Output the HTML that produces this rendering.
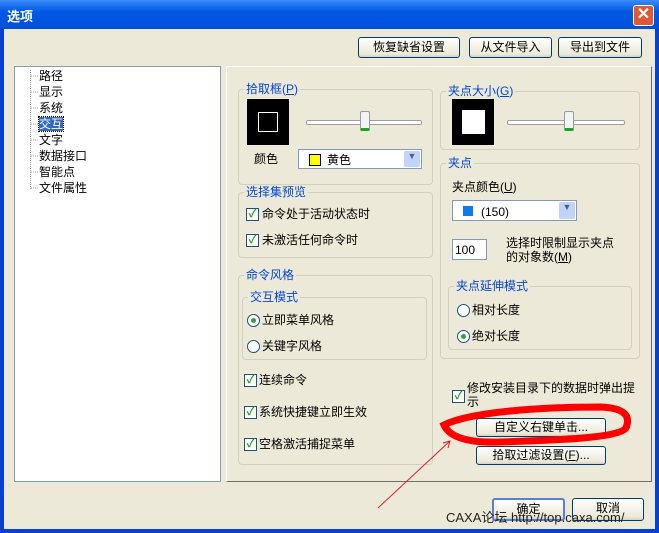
<html><head><style>
body{margin:0;width:659px;height:533px;overflow:hidden;font:12px "Liberation Sans","Noto Sans CJK SC","WenQuanYi Zen Hei",sans-serif;background:#0a246a;position:relative}
.a{position:absolute}
.win{left:0;top:0;width:659px;height:533px;background:#ECE9D8;border-left:4px solid #0841d0;border-right:4px solid #0841d0;border-bottom:4px solid #0841d0;box-sizing:border-box}
.title{left:0;top:0;width:659px;height:29px;background:linear-gradient(#3a8cf8,#0058e6 40%,#0050d8);color:#fff;font-weight:bold;font-size:13px}
.btn{border:1px solid #003c74;border-radius:3px;background:linear-gradient(#fff,#ece9d8 85%,#d6d0c0);text-align:center;box-sizing:border-box;line-height:18px}
.grp{border:1px solid #d0d0bf;border-radius:4px;box-sizing:border-box}
.gl{background:#ECE9D8;color:#0046d5;padding:0 2px;line-height:14px}
.cb{width:13px;height:13px;border:1px solid #1c5180;background:#fff;box-sizing:border-box;color:#21a121;font-size:11px;line-height:11px;text-align:center;font-weight:bold}
.rb{width:13px;height:13px;border:1px solid #1c5180;border-radius:50%;background:#fff;box-sizing:border-box}
.rb.on::after{content:"";position:absolute;left:3px;top:3px;width:5px;height:5px;border-radius:50%;background:#2fa52f}
.t{line-height:14px;white-space:nowrap}
.sel{border:1px solid #7f9db9;background:#fff;box-sizing:border-box}
.dd{position:absolute;right:1px;top:1px;bottom:1px;width:16px;background:#c1d3fb;border-radius:2px;color:#4d6185;font-size:9px;text-align:center}
.track{height:3px;border:1px solid #9d9c99;background:#fff;border-radius:2px}
.thumb{width:10px;height:20px;background:#f3f3ef;border:1px solid #8f9ea8;border-bottom:3px solid #21a121;border-radius:2px;box-sizing:border-box}
</style></head><body>
<div class="a win"></div>
<div class="a title"><span class="a" style="left:7px;top:6px">选项</span>
<div class="a" style="left:633px;top:5px;width:21px;height:21px;background:#e0583a;border:1px solid #fff;border-radius:3px;box-sizing:border-box;color:#fff;font-size:16px;text-align:center;line-height:18px">✕</div></div>
<div class="a btn" style="left:358px;top:37px;width:102px;height:21px">恢复缺省设置</div>
<div class="a btn" style="left:469px;top:37px;width:83px;height:21px">从文件导入</div>
<div class="a btn" style="left:558px;top:37px;width:84px;height:21px">导出到文件</div>
<div class="a" style="left:14px;top:66px;width:207px;height:416px;background:#fff;border:1px solid #7f9db9;box-sizing:border-box"></div>
<svg class="a" style="left:28px;top:68px" width="12" height="130"><path d="M2.5 2V121 M3 8H10 M3 24H10 M3 40H10 M3 56H10 M3 72H10 M3 88H10 M3 104H10 M3 120H10" stroke="#999" stroke-dasharray="1 1" fill="none"/></svg>
<div class="a t" style="left:39px;top:68px;line-height:16px">路径<br>显示<br>系统<br><span style="background:#316ac5;color:#fff;outline:1px dotted #000">交互</span><br>文字<br>数据接口<br>智能点<br>文件属性</div>
<div class="a" style="left:226px;top:66px;width:426px;height:416px;border:1px solid;border-color:#fff #716f64 #716f64 #fff;box-sizing:border-box"></div>
<div class="a grp" style="left:238px;top:89px;width:195px;height:96px"></div>
<div class="a gl" style="left:244px;top:82px">拾取框(<u>P</u>)</div>
<div class="a" style="left:247px;top:99px;width:42px;height:46px;background:#000"></div>
<div class="a" style="left:258px;top:112px;width:20px;height:20px;border:1px solid #fff;box-sizing:border-box"></div>
<div class="a track" style="left:306px;top:120px;width:114px"></div>
<div class="a thumb" style="left:360px;top:111px"></div>
<div class="a t" style="left:254px;top:152px">颜色</div>
<div class="a sel" style="left:298px;top:149px;width:124px;height:20px"><div class="a" style="left:10px;top:4px;width:10px;height:10px;background:#ff0;border:1px solid #000"></div><span class="a t" style="left:28px;top:3px">黄色</span><div class="dd">▼</div></div>
<div class="a grp" style="left:238px;top:192px;width:195px;height:66px"></div>
<div class="a gl" style="left:244px;top:185px">选择集预览</div>
<div class="a cb" style="left:246px;top:208px">✓</div><span class="a t" style="left:262px;top:207px">命令处于活动状态时</span>
<div class="a cb" style="left:246px;top:234px">✓</div><span class="a t" style="left:262px;top:233px">未激活任何命令时</span>
<div class="a grp" style="left:238px;top:275px;width:195px;height:190px"></div>
<div class="a gl" style="left:244px;top:268px">命令风格</div>
<div class="a grp" style="left:242px;top:297px;width:185px;height:63px"></div>
<div class="a gl" style="left:248px;top:290px">交互模式</div>
<div class="a rb on" style="left:247px;top:314px"></div><span class="a t" style="left:262px;top:313px">立即菜单风格</span>
<div class="a rb" style="left:247px;top:340px"></div><span class="a t" style="left:262px;top:339px">关键字风格</span>
<div class="a cb" style="left:244px;top:374px">✓</div><span class="a t" style="left:259px;top:373px">连续命令</span>
<div class="a cb" style="left:244px;top:406px">✓</div><span class="a t" style="left:259px;top:405px">系统快捷键立即生效</span>
<div class="a cb" style="left:244px;top:438px">✓</div><span class="a t" style="left:259px;top:437px">空格激活捕捉菜单</span>
<div class="a grp" style="left:440px;top:91px;width:200px;height:59px"></div>
<div class="a gl" style="left:446px;top:84px">夹点大小(<u>G</u>)</div>
<div class="a" style="left:452px;top:99px;width:42px;height:46px;background:#000"></div>
<div class="a" style="left:462px;top:110px;width:23px;height:24px;background:#fff"></div>
<div class="a track" style="left:507px;top:120px;width:116px"></div>
<div class="a thumb" style="left:564px;top:111px"></div>
<div class="a grp" style="left:440px;top:163px;width:200px;height:196px"></div>
<div class="a gl" style="left:446px;top:156px">夹点</div>
<span class="a t" style="left:452px;top:180px">夹点颜色(<u>U</u>)</span>
<div class="a sel" style="left:452px;top:200px;width:125px;height:21px"><div class="a" style="left:10px;top:5px;width:10px;height:10px;background:#0a7cf0"></div><span class="a t" style="left:28px;top:4px">(150)</span><div class="dd">▼</div></div>
<div class="a sel" style="left:452px;top:239px;width:35px;height:21px"><span class="a t" style="left:2px;top:3px">100</span></div>
<span class="a t" style="left:506px;top:236px">选择时限制显示夹点<br>的对象数(<u>M</u>)</span>
<div class="a grp" style="left:448px;top:286px;width:184px;height:64px"></div>
<div class="a gl" style="left:454px;top:279px">夹点延伸模式</div>
<div class="a rb" style="left:457px;top:304px"></div><span class="a t" style="left:472px;top:303px">相对长度</span>
<div class="a rb on" style="left:457px;top:330px"></div><span class="a t" style="left:472px;top:329px">绝对长度</span>
<div class="a cb" style="left:452px;top:390px">✓</div><span class="a t" style="left:467px;top:381px">修改安装目录下的数据时弹出提<br>示</span>
<div class="a btn" style="left:476px;top:418px;width:130px;height:19px;line-height:17px">自定义右键单击...</div>
<div class="a btn" style="left:476px;top:446px;width:130px;height:19px;line-height:17px">拾取过滤设置(<u>F</u>)...</div>
<div class="a btn" style="left:492px;top:498px;width:73px;height:23px;border:2px solid #5a7edc">确定</div>
<div class="a btn" style="left:572px;top:498px;width:72px;height:23px">取消</div>
<svg class="a" style="left:0;top:0" width="659" height="533">
<path d="M444 425 C470 412,540 407,600 407 C628 408,630 418,626 428 C618 438,560 440,500 442 C470 443,450 438,444 425 Z" fill="none" stroke="#f00" stroke-width="7"/>
<path d="M378 508 L450 441 M443 443 L450 441 L448 448" fill="none" stroke="#d22" stroke-width="1"/>
</svg>
<span class="a t" style="left:446px;top:511px;font-size:13px;color:#222">CAXA论坛 http://top.caxa.com/</span>
</body></html>
